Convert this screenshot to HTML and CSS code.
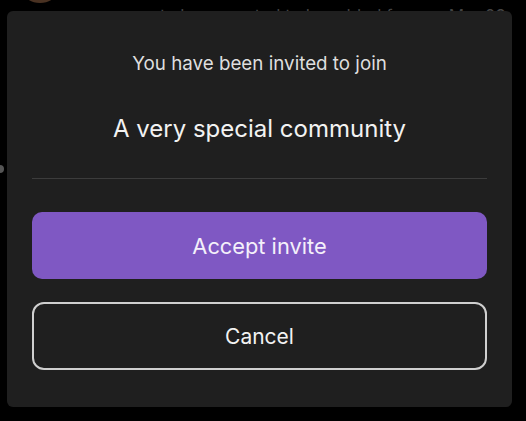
FILE: index.html
```html
<!DOCTYPE html>
<html lang="en">
<head>
<meta charset="utf-8">
<title>Invite</title>
<link rel="stylesheet" href="styles.css">
</head>
<body>
  <div class="backdrop">
    <div class="bg-row">
      <span class="avatar"></span>
      <span class="bg-text">to be accepted to be added for</span>
      <span class="bg-date">Mar 09</span>
    </div>
    <span class="bg-dot"></span>
  </div>
  <div class="dialog">
    <p class="subtitle">You have been invited to join</p>
    <h1 class="title">A very special community</h1>
    <hr class="divider">
    <button class="btn btn-primary">Accept invite</button>
    <button class="btn btn-secondary">Cancel</button>
  </div>
</body>
</html>
```

FILE: styles.css
```css
html, body {
  margin: 0;
  padding: 0;
  background: #000;
  width: 526px;
  height: 421px;
  overflow: hidden;
  font-family: Inter, "Noto Sans", "Liberation Sans", sans-serif;
}

.backdrop {
  position: relative;
  height: 421px;
}

.bg-row {
  display: flex;
  align-items: flex-start;
  position: absolute;
  top: -18px;
  left: 24px;
  right: 20px;
}

.avatar {
  width: 32px;
  height: 21px;
  border-radius: 50%;
  background: #4a3222;
  flex: none;
}

.bg-text {
  font-size: 17px;
  color: #444;
  padding-top: 24px;
  margin-left: 104px;
  white-space: nowrap;
}

.bg-date {
  font-size: 17px;
  color: #444;
  padding-top: 24px;
  margin-left: auto;
  white-space: nowrap;
}

.bg-dot {
  position: absolute;
  left: -4px;
  top: 165px;
  width: 8px;
  height: 8px;
  border-radius: 50%;
  background: #555;
}

.dialog {
  position: absolute;
  left: 7px;
  top: 11px;
  width: 505px;
  height: 396px;
  box-sizing: border-box;
  background: #1f1f1f;
  border-radius: 6px;
  padding: 40px 25px 0;
  display: flex;
  flex-direction: column;
}

.subtitle {
  margin: 0;
  text-align: center;
  font-size: 18.8px;
  line-height: 26px;
  color: #dedede;
}

.title {
  margin: 36px 0 0;
  text-align: center;
  font-size: 24px;
  font-weight: 400;
  line-height: 32px;
  color: #f2f2f2;
}

.divider {
  margin: 33px 0 0;
  border: none;
  height: 1px;
  background: #3c3c3c;
}

.btn {
  font-family: inherit;
  width: 100%;
  box-sizing: border-box;
  cursor: pointer;
}

.btn-primary {
  margin-top: 33px;
  height: 67px;
  border: none;
  border-radius: 10px;
  background: #7f58c3;
  color: #f4f0fa;
  font-size: 21.8px;
}

.btn-secondary {
  margin-top: 23px;
  height: 68px;
  border: 2px solid #cfcfcf;
  border-radius: 12px;
  background: transparent;
  color: #f2f2f2;
  font-size: 21px;
}
```
